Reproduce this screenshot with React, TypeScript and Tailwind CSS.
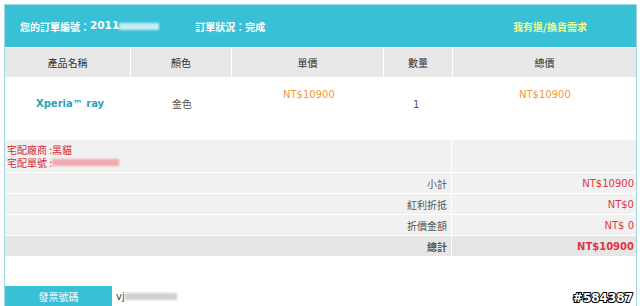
const cjk = "font-['Noto_Sans_CJK_TC','Noto_Sans',sans-serif]";
const latin = "font-['DejaVu_Sans','Noto_Sans_CJK_TC',sans-serif]";

// Blurred placeholder for masked numbers
const Blur = ({ w, color }: { w: number; color: string }) => (
  <span
    className={`inline-block h-[7px] blur-[1px] align-middle ${color}`}
    style={{ width: w }}
  />
);

const SumRow = ({ label, value, total = false }: { label: string; value: string; total?: boolean }) => (
  <div className={`flex h-[21px] border-t border-white ${total ? 'bg-[#e6e6e6]' : 'bg-[#f1f1f1]'}`}>
    <div
      className={`flex w-[447px] items-center justify-end border-r border-white pr-[4px] text-[10px] text-[#555] ${cjk} ${total ? 'font-bold text-[#333]' : ''}`}
    >
      {label}
    </div>
    <div
      className={`flex flex-1 items-center justify-end pr-[2px] text-[10px] text-[#e0353f] ${latin} ${total ? 'font-bold' : ''}`}
    >
      {value}
    </div>
  </div>
);

export default function App() {
  return (
    <div className="relative h-[306px] w-[640px] overflow-hidden bg-white pl-[4px] pt-[4px]">
      <div className="w-[633px] border-x border-t border-[#9fd7e2]">
        {/* Title bar */}
        <div className={`flex h-[43px] items-center border-b border-white bg-[#38c0d7] text-[10px] font-bold text-white ${cjk}`}>
          <span className="ml-[15px] flex items-center">
            您的訂單編號：<span className={`${latin} text-[10.5px]`}>2011</span>
            <Blur w={40} color="bg-[#c7ecf3]" />
          </span>
          <span className="ml-[36px]">訂單狀況：完成</span>
          <span className="ml-auto mr-[49px] text-[#f4ff8a]">我有退/換貨需求</span>
        </div>

        {/* Column headers */}
        <div className={`flex h-[29px] bg-[#e8e8e8] text-[10px] text-[#333] ${cjk}`}>
          <div className="flex w-[125px] items-center justify-center">產品名稱</div>
          <div className="flex w-[101px] items-center justify-center border-l border-white">顏色</div>
          <div className="flex w-[152px] items-center justify-center border-l border-white">單價</div>
          <div className="flex w-[69px] items-center justify-center border-l border-white">數量</div>
          <div className="flex flex-1 items-center justify-center border-l border-white">總價</div>
        </div>

        {/* Product row */}
        <div className="flex h-[63px] bg-white">
          <div className={`w-[125px] pl-[31px] pt-[19px] text-[10px] font-bold text-[#2aa3bb] ${latin}`}>Xperia™ ray</div>
          <div className={`w-[101px] pl-[42px] pt-[19px] text-[10px] text-[#555] ${cjk}`}>金色</div>
          <div className={`w-[152px] pl-[52px] pt-[10px] text-[10px] text-[#f2993b] ${latin}`}>NT$10900</div>
          <div className={`w-[69px] pl-[30px] pt-[20px] text-[10px] text-[#555] ${latin}`}>1</div>
          <div className={`flex-1 pl-[67px] pt-[10px] text-[10px] text-[#f2993b] ${latin}`}>NT$10900</div>
        </div>

        {/* Shipping info */}
        <div className="flex h-[32px] bg-[#f1f1f1]">
          <div className={`flex w-[447px] flex-col justify-center border-r border-white pl-[2px] text-[10px] text-[#d42a30] ${cjk}`}>
            <div className="h-[13px] leading-[13px]">宅配廠商 :黑貓</div>
            <div className="flex h-[13px] items-center leading-[13px]">
              宅配單號 :<Blur w={67} color="bg-[#f1a8b0]" />
            </div>
          </div>
          <div className="flex-1" />
        </div>

        <SumRow label="小計" value="NT$10900" />
        <SumRow label="紅利折抵" value="NT$0" />
        <SumRow label="折價金額" value="NT$ 0" />
        <SumRow label="總計" value="NT$10900" total />

        <div className="h-[30px]" />

        {/* Invoice */}
        <div className="flex h-[20px] items-start">
          <div className={`flex h-[20px] w-[107px] items-center justify-center bg-[#38c0d7] text-[10px] text-white ${cjk}`}>
            發票號碼
          </div>
          <span className={`ml-[4px] mt-[3px] flex items-center text-[10px] text-[#444] ${latin}`}>
            vj<Blur w={52} color="bg-[#d0d0d0]" />
          </span>
        </div>
      </div>

      {/* Watermark */}
      <span className="absolute right-[7px] top-[289px] font-['DejaVu_Sans',sans-serif] text-[12px] font-bold text-white [-webkit-text-stroke:2px_#000] [paint-order:stroke]">
        #584387
      </span>
    </div>
  );
}
